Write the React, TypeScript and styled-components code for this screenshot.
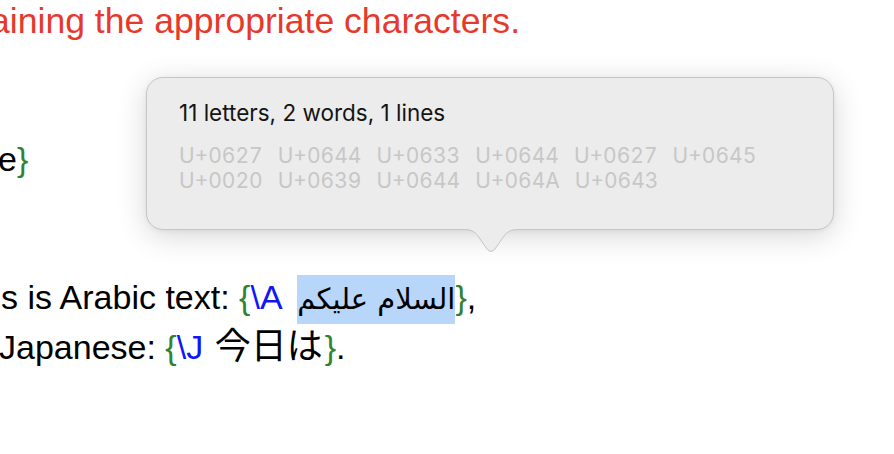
import React from 'react'
import styled, { createGlobalStyle } from 'styled-components'

const GlobalStyle = createGlobalStyle`
  html, body {
    margin: 0;
    padding: 0;
    background: #ffffff;
  }
`

const Page = styled.div`
  position: relative;
  width: 894px;
  height: 454px;
  overflow: hidden;
  background: #ffffff;
`

const Doc = styled.div`
  display: flex;
  flex-direction: column;
  margin-top: -2px;
  font-family: "Liberation Sans", "Noto Sans CJK JP", sans-serif;
  font-size: 34px;
  line-height: 46px;
  color: #000000;
`

const Line = styled.div<{ shift?: number }>`
  height: 46px;
  white-space: nowrap;
  margin-left: ${({ shift }) => shift || 0}px;
`

const Note = styled.span`
  color: #e6392b;
  font-size: 35.6px;
`

const Brace = styled.span`
  color: #33822f;
`

const Escape = styled.span`
  color: #1016f5;
`

const Arabic = styled.span`
  unicode-bidi: isolate;
  margin-left: 7px;
  font-family: "DejaVu Sans", sans-serif;
  font-size: 29px;
  background: #b8d6fa;
  padding: 7px 0 8px 0;
`

const Kanji = styled.span`
  font-family: "Noto Sans CJK JP", sans-serif;
  font-size: 36px;
  margin-left: 2px;
  margin-right: 2px;
`

const Popover = styled.div`
  position: absolute;
  left: 146px;
  top: 77px;
  width: 688px;
  height: 153px;
  box-sizing: border-box;
  padding: 22px 32px 0 32px;
  background: #ececec;
  border: 1px solid #c6c6c6;
  border-radius: 17px;
  box-shadow: 0 6px 30px rgba(0, 0, 0, 0.16), 0 1px 5px rgba(0, 0, 0, 0.06);
  font-family: Inter, "Liberation Sans", sans-serif;
  font-size: 21px;
  line-height: 25px;
`

const Summary = styled.div`
  color: #141414;
  font-size: 22.5px;
`

const CodeList = styled.div`
  display: flex;
  flex-wrap: wrap;
  column-gap: 15px;
  margin-top: 18px;
  color: #c7c7c7;
  font-variant-numeric: tabular-nums;
`

const Code = styled.span`
  white-space: nowrap;
`

const Tail = styled.svg`
  position: absolute;
  left: 316px;
  top: calc(100% - 1px);
  overflow: visible;
`

const codes = [
  'U+0627', 'U+0644', 'U+0633', 'U+0644', 'U+0627', 'U+0645',
  'U+0020', 'U+0639', 'U+0644', 'U+064A', 'U+0643',
]

export default function App() {
  return (
    <Page>
      <GlobalStyle />
      <Doc>
        <Line shift={-10}>
          <Note>aining the appropriate characters.</Note>
        </Line>
        <Line />
        <Line />
        <Line shift={-2}>
          e<Brace>{'}'}</Brace>
        </Line>
        <Line />
        <Line />
        <Line shift={1}>
          s is Arabic text: <Brace>{'{'}</Brace>
          <Escape>\A</Escape> <Arabic dir="rtl">السلام عليكم</Arabic>
          <Brace>{'}'}</Brace>,
        </Line>
        <Line shift={-1}>
          Japanese: <Brace>{'{'}</Brace>
          <Escape>\J</Escape> <Kanji>今日は</Kanji>
          <Brace>{'}'}</Brace>.
        </Line>
      </Doc>

      <Popover>
        <Summary>11 letters, 2 words, 1 lines</Summary>
        <CodeList>
          {codes.map((c, i) => (
            <Code key={i}>{c}</Code>
          ))}
        </CodeList>
        <Tail width="56" height="26" viewBox="0 0 56 26">
          <path
            d="M0 0 L0 1.5 C8 1.5 11 3 15 8 L24 21 Q28 26 32 21 L41 8 C45 3 48 1.5 56 1.5 L56 0 Z"
            fill="#ececec"
          />
          <path
            d="M0 1.5 C8 1.5 11 3 15 8 L24 21 Q28 26 32 21 L41 8 C45 3 48 1.5 56 1.5"
            fill="none"
            stroke="#c6c6c6"
            strokeWidth="1"
          />
        </Tail>
      </Popover>
    </Page>
  )
}
